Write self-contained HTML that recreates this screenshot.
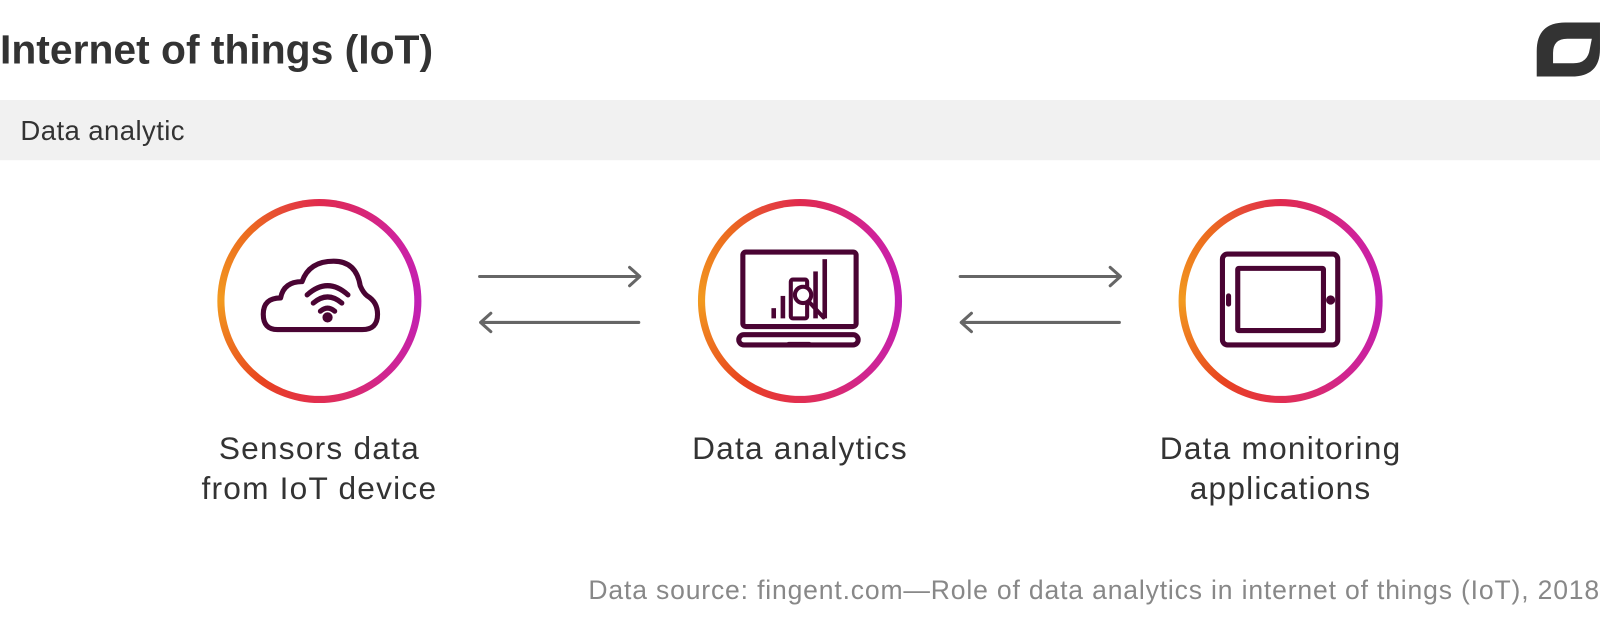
<!DOCTYPE html>
<html><head><meta charset="utf-8"><style>
html,body{margin:0;padding:0;background:#fff;width:1600px;height:640px;overflow:hidden;position:relative;font-family:"Liberation Sans",sans-serif;}
#w{position:absolute;left:0;top:0;width:1568px;height:628px;transform:scale(1.0204);transform-origin:0 0;}
.t{position:absolute;white-space:nowrap;}
.ring{position:absolute;width:200px;height:200px;border-radius:50%;background:conic-gradient(from 0deg,#e02a4e 0deg,#d0229a 50deg,#c11fb5 90deg,#d1258e 140deg,#e3304a 185deg,#e8431f 215deg,#f29a1f 270deg,#ec6a1f 315deg,#e02a4e 360deg);}
.ring::after{content:"";position:absolute;left:7px;top:7px;right:7px;bottom:7px;border-radius:50%;background:#fff;}
.lab{position:absolute;width:340px;text-align:center;font-size:31px;letter-spacing:1.2px;color:#333;line-height:39px;}
</style></head><body><div id="w">
<div class="t" style="left:0;top:27px;font-size:40px;font-weight:bold;color:#333;">Internet of things (IoT)</div>
<svg style="position:absolute;left:1468px;top:18px" width="100" height="60"><path d="M38 57 L38 32 Q38 4 66 4 L100 4 L100 30 Q100 57 72 57 Z M54 44 L54 34 Q54 20 68 20 L92 20 L90 30 Q88 44 74 44 Z" fill="#333" fill-rule="evenodd"/></svg>
<div style="position:absolute;left:0;top:98px;width:1568px;height:59px;background:#f1f1f1"></div>
<div class="t" style="left:20px;top:113px;font-size:27px;letter-spacing:0.4px;color:#333;">Data analytic</div>

<div class="ring" style="left:213px;top:195px"></div>
<div class="ring" style="left:684px;top:195px"></div>
<div class="ring" style="left:1155px;top:195px"></div>

<svg style="position:absolute;left:0;top:0" width="1568" height="628" fill="none" stroke="#4a0433" stroke-width="5" stroke-linecap="round" stroke-linejoin="round">
<g stroke="#666" stroke-width="3">
<path d="M470 271 H627 M617 262 L627 271 L617 280"/>
<path d="M626 316 H471 M481 307 L471 316 L481 325"/>
<path d="M941 271 H1098 M1088 262 L1098 271 L1088 280"/>
<path d="M1097 316 H942 M952 307 L942 316 L952 325"/>
</g>
<path d="M272 323 Q258 323 258 308 Q258 292 275 292 Q278 276 296 276 Q303 256 327 256 Q349 256 353 280 Q356 287 360 290 Q370 296 370 308 Q370 323 355 323 Z"/>
<path d="M301 289 Q321 271 341 289 M307 297 Q321 285 335 297 M314 305 Q321 299 328 305"/>
<circle cx="321" cy="311" r="2.5" fill="#4a0433"/>
<rect x="728" y="247" width="111" height="73" rx="3"/>
<rect x="724" y="328" width="117" height="10" rx="5"/>
<path d="M773 337 H793" stroke-width="4"/>
<g stroke="none" fill="#4a0433">
<rect x="756" y="302" width="4.5" height="10"/>
<rect x="765" y="290" width="4.5" height="22"/>
<rect x="797" y="266" width="4.5" height="46"/>
<rect x="806" y="254" width="4.5" height="58"/>
</g>
<rect x="775" y="274" width="16" height="38" rx="2" stroke-width="4"/>
<circle cx="787" cy="289" r="8" fill="#fff" stroke-width="4"/>
<path d="M793 296 L807 311" stroke-width="4"/>
<rect x="1198" y="249" width="113" height="89" rx="5"/>
<rect x="1213" y="263" width="84" height="61" rx="1"/>
<path d="M1204 290 V298" stroke-width="5"/>
<circle cx="1304" cy="294" r="2" fill="#4a0433"/>
</svg>

<div class="lab" style="left:143px;top:420px">Sensors data<br>from IoT device</div>
<div class="lab" style="left:614px;top:420px">Data analytics</div>
<div class="lab" style="left:1085px;top:420px">Data monitoring<br>applications</div>
<div class="t" style="right:0px;top:563px;font-size:26px;letter-spacing:0.82px;color:#888;">Data source: fingent.com—Role of data analytics in internet of things (IoT), 2018</div>
</div></body></html>
